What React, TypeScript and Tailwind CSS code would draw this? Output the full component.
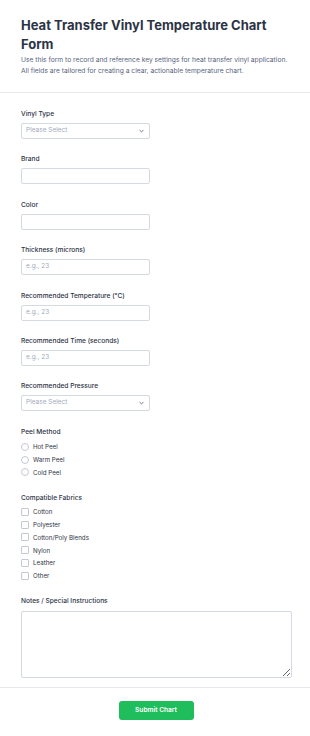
import { useState } from "react";

const fabrics = ["Cotton", "Polyester", "Cotton/Poly Blends", "Nylon", "Leather", "Other"];
const peels = ["Hot Peel", "Warm Peel", "Cold Peel"];

function Label({ text }: { text: string }) {
    return (
        <div className="text-[6.6px] leading-[10px] font-medium text-[#2c3345]">
            {text}
        </div>
    );
}

function SelectBox() {
    return (
        <div className="mt-[4px] w-[129px] h-[16px] border border-[#d5d9e2] rounded-[2px] flex items-center justify-between pl-[4px] pr-[5px]">
            <span className="text-[6.5px] text-[#a3a9bb]">Please Select</span>
            <svg width="5" height="4" viewBox="0 0 5 4">
                <path d="M0.6 1 L2.5 2.9 L4.4 1" fill="none" stroke="#6f7691" strokeWidth="1" />
            </svg>
        </div>
    );
}

function TextBox({ placeholder }: { placeholder?: string }) {
    return (
        <div className="mt-[4px] w-[129px] h-[16px] border border-[#d5d9e2] rounded-[2px] flex items-center pl-[4px]">
            <span className="text-[6.5px] text-[#a3a9bb]">{placeholder}</span>
        </div>
    );
}

function App() {
    const [notes, setNotes] = useState("");

    return (
        <div className="min-h-screen bg-white font-['Inter',sans-serif]">

            <div className="pt-[16px] pb-[16px] px-[21px] border-b border-[#e6e8ee]">
                <h1 className="text-[13px] leading-[19px] font-bold text-[#2c3345]">
                    Heat Transfer Vinyl Temperature Chart Form
                </h1>
                <p className="mt-[1px] text-[6.7px] leading-[10.5px] text-[#57647e]">
                    Use this form to record and reference key settings for heat transfer vinyl application. All fields are tailored for creating a clear, actionable temperature chart.
                </p>
            </div>

            <div className="pl-[21px] pr-[18px] pt-[16px]">

                <div className="pb-[15.4px]">
                    <Label text="Vinyl Type" />
                    <SelectBox />
                </div>

                <div className="pb-[15.4px]">
                    <Label text="Brand" />
                    <TextBox />
                </div>

                <div className="pb-[15.4px]">
                    <Label text="Color" />
                    <TextBox />
                </div>

                <div className="pb-[15.4px]">
                    <Label text="Thickness (microns)" />
                    <TextBox placeholder="e.g., 23" />
                </div>

                <div className="pb-[15.4px]">
                    <Label text="Recommended Temperature (°C)" />
                    <TextBox placeholder="e.g., 23" />
                </div>

                <div className="pb-[15.4px]">
                    <Label text="Recommended Time (seconds)" />
                    <TextBox placeholder="e.g., 23" />
                </div>

                <div className="pb-[15.4px]">
                    <Label text="Recommended Pressure" />
                    <SelectBox />
                </div>

                <div className="pb-[14.5px]">
                    <Label text="Peel Method" />
                    <div className="mt-[3.5px]">
                        {peels.map((p) => (
                            <div key={p} className="h-[12.85px] flex items-center gap-[4px]">
                                <span className="w-[8px] h-[8px] rounded-full border border-[#c3c8d4]" />
                                <span className="text-[6.2px] text-[#2c3345]">{p}</span>
                            </div>
                        ))}
                    </div>
                </div>

                <div className="pb-[14px]">
                    <Label text="Compatible Fabrics" />
                    <div className="mt-[2px]">
                        {fabrics.map((f) => (
                            <div key={f} className="h-[12.86px] flex items-center gap-[4px]">
                                <span className="w-[8px] h-[8px] rounded-[1px] border border-[#c3c8d4]" />
                                <span className="text-[6.2px] text-[#2c3345]">{f}</span>
                            </div>
                        ))}
                    </div>
                </div>

                <div className="pb-[9px]">
                    <Label text="Notes / Special Instructions" />
                    <textarea
                        value={notes}
                        onChange={(e) => setNotes(e.target.value)}
                        className="block mt-[5px] w-[271px] h-[67px] border border-[#d5d9e2] rounded-[2px] outline-none"
                    />
                </div>
            </div>

            <div className="border-t border-[#e6e8ee] pt-[12.5px] pb-[16px] flex justify-center pl-[2px]">
                <button className="w-[75px] h-[19.5px] rounded-[3px] bg-[#1fbd5c] text-white text-[6.6px] font-semibold">
                    Submit Chart
                </button>
            </div>
        </div>
    );
}

export default App;
